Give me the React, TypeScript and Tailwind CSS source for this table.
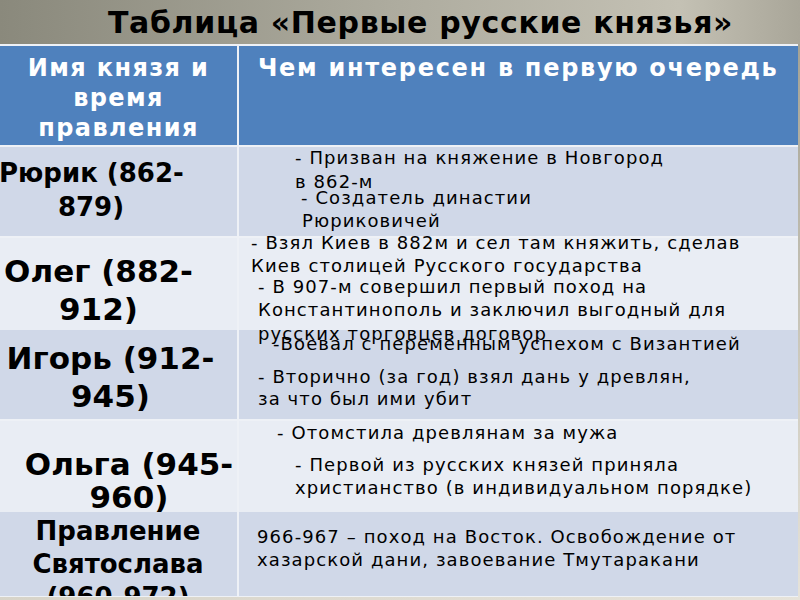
import React from "react";

const F = { fontFamily: '"DejaVu Sans", Verdana, sans-serif' };

type Line = { t: string; x: number; y: number };

function RightCell({ lines, bg }: { lines: Line[]; bg: string }) {
  let prev = 0;
  return (
    <div className={`${bg} text-[18px] tracking-[1.1px] text-black`} style={F}>
      {lines.map((l, i) => {
        const top = l.y - 11 - prev;
        prev = l.y + 11;
        return (
          <div
            key={i}
            className="relative z-10 whitespace-nowrap leading-[22px]"
            style={{ marginTop: top, marginLeft: l.x }}
          >
            {l.t}
          </div>
        );
      })}
    </div>
  );
}

function LeftCell({
  bg,
  children,
  inner,
}: {
  bg: string;
  children: React.ReactNode;
  inner: string;
}) {
  return (
    <div className={`${bg} overflow-visible`}>
      <div className={`font-bold text-center whitespace-nowrap ${inner}`}>{children}</div>
    </div>
  );
}

export default function App() {
  return (
    <div
      className="w-[800px] h-[600px] overflow-hidden bg-[linear-gradient(170deg,#8a897c_0%,#a9a799_30%,#cfccc0_70%,#e6e3da_100%)]"
      style={F}
    >
      <div className="h-[44px] flex items-center pl-[108px] pt-[1px] text-[30px] font-bold text-black tracking-[0.65px] bg-[linear-gradient(90deg,#8a897c_0%,#aeac9f_50%,#c4c1b4_85%,#a9a699_100%)]">
        Таблица «Первые русские князья»
      </div>
      <div className="w-[798px] bg-[#eef1f6] pt-[2px] flex flex-col gap-[2px] pb-[1px]">
        {/* header */}
        <div className="grid grid-cols-[237px_1fr] gap-[2px] h-[99px]">
          <div className="bg-[#4f81bd] text-white font-bold text-[24px] tracking-[1.4px] leading-[30px] text-center pt-[7px] pl-[0px]">
            Имя князя и
            <br />
            время
            <br />
            правления
          </div>
          <div className="bg-[#4f81bd] text-white font-bold text-[24px] tracking-[1.7px] leading-[30px] pt-[7px] pl-[19px] whitespace-nowrap">
            Чем интересен в первую очередь
          </div>
        </div>
        {/* row 1 */}
        <div className="grid grid-cols-[237px_1fr] gap-[2px] h-[89px]">
          <LeftCell bg="bg-[#d0d8e8]" inner="text-[26px] leading-[34px] w-[184px] -ml-[1px] pt-[9px]">
            Рюрик (862-
            <br />
            879)
          </LeftCell>
          <RightCell
            bg="bg-[#d0d8e8]"
            lines={[
              { t: "- Призван на княжение в Новгород", x: 56, y: 11 },
              { t: "в 862-м", x: 56, y: 35 },
              { t: "- Создатель династии", x: 62, y: 51 },
              { t: "Рюриковичей", x: 63, y: 74 },
            ]}
          />
        </div>
        {/* row 2 */}
        <div className="grid grid-cols-[237px_1fr] gap-[2px] h-[90px]">
          <LeftCell bg="bg-[#e9edf4]" inner="text-[31px] leading-[38px] w-[197px] pt-[14px]">
            Олег (882-
            <br />
            912)
          </LeftCell>
          <RightCell
            bg="bg-[#e9edf4]"
            lines={[
              { t: "- Взял Киев в 882м и сел там княжить, сделав", x: 12, y: 5 },
              { t: "Киев столицей Русского государства", x: 12, y: 28 },
              { t: "- В 907-м совершил первый поход на", x: 19, y: 49 },
              { t: "Константинополь и заключил выгодный для", x: 19, y: 72 },
              { t: "русских торговцев договор", x: 19, y: 96 },
            ]}
          />
        </div>
        {/* row 3 */}
        <div className="grid grid-cols-[237px_1fr] gap-[2px] h-[89px]">
          <LeftCell bg="bg-[#d0d8e8]" inner="text-[31px] leading-[38px] w-[221px] pt-[9px]">
            Игорь (912-
            <br />
            945)
          </LeftCell>
          <RightCell
            bg="bg-[#d0d8e8]"
            lines={[
              { t: "-Воевал с переменным успехом с Византией", x: 34, y: 14 },
              { t: "- Вторично (за год) взял дань у древлян,", x: 19, y: 47 },
              { t: "за что был ими убит", x: 19, y: 69 },
            ]}
          />
        </div>
        {/* row 4 */}
        <div className="grid grid-cols-[237px_1fr] gap-[2px] h-[89px]">
          <LeftCell bg="bg-[#e9edf4]" inner="text-[31px] leading-[33px] w-[258px] pt-[27px]">
            Ольга (945-
            <br />
            960)
          </LeftCell>
          <RightCell
            bg="bg-[#e9edf4]"
            lines={[
              { t: "- Отомстила древлянам за мужа", x: 38, y: 12 },
              { t: "- Первой из русских князей приняла", x: 56, y: 44 },
              { t: "христианство (в индивидуальном порядке)", x: 56, y: 67 },
            ]}
          />
        </div>
        {/* row 5 */}
        <div className="grid grid-cols-[237px_1fr] gap-[2px] h-[84px] overflow-hidden">
          <LeftCell bg="bg-[#d0d8e8]" inner="text-[26px] leading-[33px] w-[236px] pt-[3px]">
            Правление
            <br />
            Святослава
            <br />
            (960-972)
          </LeftCell>
          <RightCell
            bg="bg-[#d0d8e8]"
            lines={[
              { t: "966-967 – поход на Восток. Освобождение от", x: 18, y: 25 },
              { t: "хазарской дани, завоевание Тмутаракани", x: 18, y: 48 },
            ]}
          />
        </div>
      </div>
    </div>
  );
}
